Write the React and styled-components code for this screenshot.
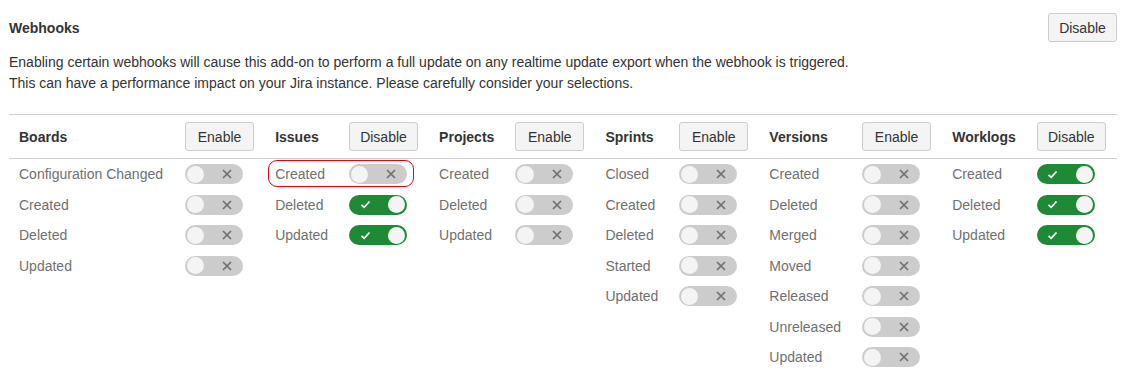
import React from "react";
import styled, {createGlobalStyle} from "styled-components";

const groups = [
  {
    name: "Boards",
    action: "Enable",
    items: [
      {label: "Configuration Changed", on: false},
      {label: "Created", on: false},
      {label: "Deleted", on: false},
      {label: "Updated", on: false}
    ]
  },
  {
    name: "Issues",
    action: "Disable",
    items: [
      {label: "Created", on: false, marked: true},
      {label: "Deleted", on: true},
      {label: "Updated", on: true}
    ]
  },
  {
    name: "Projects",
    action: "Enable",
    items: [
      {label: "Created", on: false},
      {label: "Deleted", on: false},
      {label: "Updated", on: false}
    ]
  },
  {
    name: "Sprints",
    action: "Enable",
    items: [
      {label: "Closed", on: false},
      {label: "Created", on: false},
      {label: "Deleted", on: false},
      {label: "Started", on: false},
      {label: "Updated", on: false}
    ]
  },
  {
    name: "Versions",
    action: "Enable",
    items: [
      {label: "Created", on: false},
      {label: "Deleted", on: false},
      {label: "Merged", on: false},
      {label: "Moved", on: false},
      {label: "Released", on: false},
      {label: "Unreleased", on: false},
      {label: "Updated", on: false}
    ]
  },
  {
    name: "Worklogs",
    action: "Disable",
    items: [
      {label: "Created", on: true},
      {label: "Deleted", on: true},
      {label: "Updated", on: true}
    ]
  }
];

const rowCount = Math.max(...groups.map(g => g.items.length));

const Toggle = ({on}) => (
  <Switch $on={on}>
    <Knob />
    <Mark>
      {on ? (
        <svg width="11" height="9" viewBox="0 0 11 9">
          <path d="M1.5 4.8 L4.2 7.3 L9.5 1.5" fill="none" stroke="#fff" strokeWidth="1.8" />
        </svg>
      ) : (
        <svg width="10" height="10" viewBox="0 0 10 10">
          <path d="M1 1 L9 9 M9 1 L1 9" fill="none" stroke="#707070" strokeWidth="1.7" />
        </svg>
      )}
    </Mark>
  </Switch>
);

const App = () => (
  <Page>
    <GlobalStyle />
    <TitleBar>
      <Title>Webhooks</Title>
      <Button>Disable</Button>
    </TitleBar>
    <Intro>
      Enabling certain webhooks will cause this add-on to perform a full update
      on any realtime update export when the webhook is triggered.
      <br />
      This can have a performance impact on your Jira instance. Please carefully
      consider your selections.
    </Intro>
    <Table>
      <thead>
        <tr>
          {groups.map(g => (
            <React.Fragment key={g.name}>
              <Head>{g.name}</Head>
              <Head>
                <Button>{g.action}</Button>
              </Head>
            </React.Fragment>
          ))}
        </tr>
      </thead>
      <tbody>
        {Array.from({length: rowCount}).map((_, i) => (
          <tr key={i}>
            {groups.map(g => {
              const item = g.items[i];
              return (
                <React.Fragment key={g.name}>
                  <Label $marked={item && item.marked}>{item ? item.label : ""}</Label>
                  <Cell>{item ? <Toggle on={item.on} /> : null}</Cell>
                </React.Fragment>
              );
            })}
          </tr>
        ))}
      </tbody>
    </Table>
  </Page>
);

export default App;

const GlobalStyle = createGlobalStyle`
  body {
    margin: 0;
    background: #fff;
    font-family: "Liberation Sans", Arial, sans-serif;
    font-size: 14px;
    color: #333;
  }
`;

const Page = styled.div`
  padding: 13px 7px 0 9px;
`;

const TitleBar = styled.div`
  display: flex;
  align-items: center;
  justify-content: space-between;
`;

const Title = styled.h2`
  margin: 0;
  font-size: 14px;
  font-weight: bold;
  color: #333;
`;

const Intro = styled.p`
  margin: 10px 0 20px 0;
  line-height: 21px;
  color: #333;
`;

const Button = styled.button`
  height: 29px;
  min-width: 69px;
  padding: 0 10px;
  font-family: inherit;
  font-size: 14px;
  color: #333;
  background: #f4f4f4;
  border: 1px solid #ccc;
  border-radius: 3px;
  cursor: pointer;
`;

const Table = styled.table`
  width: 100%;
  border-collapse: collapse;
  border-top: 1px solid #d0d0d0;
`;

const Head = styled.th`
  padding: 7px 10px 7px 10px;
  text-align: left;
  font-weight: bold;
  white-space: nowrap;
  border-bottom: 1px solid #d0d0d0;
`;

const Label = styled.td`
  position: relative;
  padding: 5px 10px 5.5px 10px;
  line-height: 20px;
  color: #707070;
  white-space: nowrap;
  &::after {
    content: "";
    display: ${props => (props.$marked ? "block" : "none")};
    position: absolute;
    left: 3px;
    top: 1px;
    width: 144px;
    height: 25px;
    border: 1.5px solid #e8000d;
    border-radius: 9px;
    pointer-events: none;
  }
`;

const Cell = styled.td`
  padding: 5px 10px 5.5px 10px;
  line-height: 20px;
  vertical-align: middle;
`;

const Switch = styled.span`
  display: flex;
  flex-direction: ${props => (props.$on ? "row-reverse" : "row")};
  justify-content: space-between;
  align-items: center;
  box-sizing: border-box;
  width: 58px;
  height: 20px;
  padding: 0 2px;
  border-radius: 10px;
  background: ${props => (props.$on ? "#1e8a35" : "#cccccc")};
`;

const Knob = styled.span`
  width: 17px;
  height: 17px;
  border-radius: 50%;
  background: #f4f4f4;
`;

const Mark = styled.span`
  display: flex;
  align-items: center;
  justify-content: center;
  width: 28px;
  height: 20px;
`;
